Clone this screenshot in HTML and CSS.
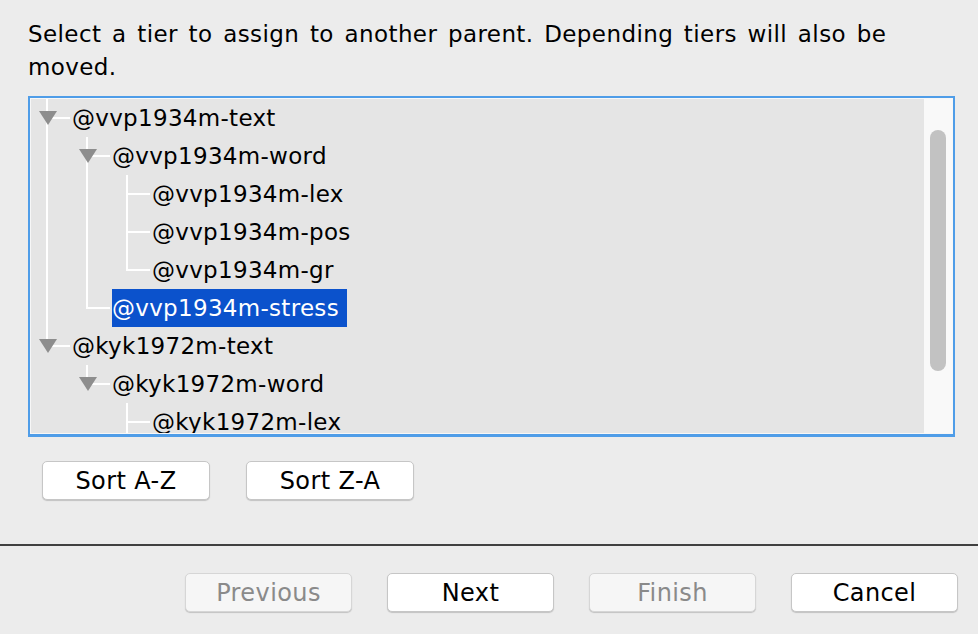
FILE: index.html
```html
<!DOCTYPE html>
<html>
<head>
<meta charset="utf-8">
<link rel="stylesheet" href="styles.css">
</head>
<body>
<div class="dialog">
  <p class="intro">Select a tier to assign to another parent. Depending tiers will also be moved.</p>

  <div class="treebox">
    <div class="tree">
      <div class="row">
        <span class="cell tee"><i class="toggle"></i></span>
        <span class="label">@vvp1934m-text</span>
      </div>
      <div class="row">
        <span class="cell pipe"></span>
        <span class="cell tee"><i class="toggle"></i></span>
        <span class="label">@vvp1934m-word</span>
      </div>
      <div class="row">
        <span class="cell pipe"></span>
        <span class="cell pipe"></span>
        <span class="cell tee"></span>
        <span class="label">@vvp1934m-lex</span>
      </div>
      <div class="row">
        <span class="cell pipe"></span>
        <span class="cell pipe"></span>
        <span class="cell tee"></span>
        <span class="label">@vvp1934m-pos</span>
      </div>
      <div class="row">
        <span class="cell pipe"></span>
        <span class="cell pipe"></span>
        <span class="cell elbow"></span>
        <span class="label">@vvp1934m-gr</span>
      </div>
      <div class="row">
        <span class="cell pipe"></span>
        <span class="cell elbow"></span>
        <span class="label selected">@vvp1934m-stress</span>
      </div>
      <div class="row">
        <span class="cell elbow"><i class="toggle"></i></span>
        <span class="label">@kyk1972m-text</span>
      </div>
      <div class="row">
        <span class="cell"></span>
        <span class="cell elbow"><i class="toggle"></i></span>
        <span class="label">@kyk1972m-word</span>
      </div>
      <div class="row">
        <span class="cell"></span>
        <span class="cell"></span>
        <span class="cell tee"></span>
        <span class="label">@kyk1972m-lex</span>
      </div>
    </div>
    <div class="scrollbar"><div class="thumb"></div></div>
  </div>

  <div class="sort-buttons">
    <button class="btn">Sort A-Z</button>
    <button class="btn">Sort Z-A</button>
  </div>

  <div class="separator"></div>

  <div class="footer">
    <button class="btn disabled">Previous</button>
    <button class="btn">Next</button>
    <button class="btn disabled">Finish</button>
    <button class="btn">Cancel</button>
  </div>
</div>
</body>
</html>
```

FILE: styles.css
```css
html, body {
  margin: 0;
  padding: 0;
  background: #ececec;
}

body {
  font-family: "DejaVu Sans", "Liberation Sans", sans-serif;
  font-size: 23px;
  color: #000;
}

.dialog {
  width: 978px;
  height: 634px;
  overflow: hidden;
}

.intro {
  margin: 0;
  padding: 18px 0 0 28px;
  width: 900px;
  line-height: 33px;
  letter-spacing: 0.4px;
  word-spacing: 3px;
}

.treebox {
  margin: 12px 0 0 28px;
  width: 927px;
  height: 341px;
  box-sizing: border-box;
  border: 2px solid #4f9de8;
  border-bottom-width: 3px;
  padding: 1px;
  background: #f7f7f7;
  display: flex;
}

.tree {
  flex: 1;
  background: #e5e5e5;
  overflow: hidden;
  padding-left: 1px;
}

.row {
  height: 38px;
  display: flex;
  align-items: stretch;
}

.cell {
  width: 40px;
  flex: none;
  position: relative;
}

.cell.pipe::before,
.cell.tee::before,
.cell.elbow::before {
  content: "";
  position: absolute;
  left: 14px;
  top: 0;
  width: 2px;
  background: #fff;
}

.cell.pipe::before,
.cell.tee::before {
  bottom: 0;
}

.cell.elbow::before {
  height: 20px;
}

.cell.tee::after,
.cell.elbow::after {
  content: "";
  position: absolute;
  left: 14px;
  right: 2px;
  top: 18px;
  height: 2px;
  background: #fff;
}

.toggle {
  position: absolute;
  left: 7px;
  top: 12px;
  width: 0;
  height: 0;
  border-left: 9px solid transparent;
  border-right: 9px solid transparent;
  border-top: 14px solid #8d8d8d;
  z-index: 1;
}

.label {
  line-height: 38px;
  white-space: nowrap;
  letter-spacing: 0.3px;
  padding: 0 8px 0 0;
}

.label.selected {
  background: #0b52cc;
  color: #fff;
}

.scrollbar {
  width: 28px;
  flex: none;
  background: #f9f9f9;
  position: relative;
}

.thumb {
  margin: 31px 0 0 6px;
  width: 16px;
  height: 241px;
  border-radius: 8px;
  background: #c2c2c2;
}

.sort-buttons {
  display: flex;
  gap: 36px;
  padding: 24px 0 0 42px;
}

.btn {
  font-family: "DejaVu Sans", "Liberation Sans", sans-serif;
  font-size: 24px;
  letter-spacing: 0.4px;
  color: #000;
  background: #fff;
  border: 1px solid #c6c6c6;
  border-radius: 5px;
  box-shadow: 0 1px 1px rgba(0, 0, 0, 0.18);
  width: 168px;
  height: 39px;
  padding: 0;
  margin: 0;
}

.btn.disabled {
  background: #f6f6f6;
  color: #8a8a8a;
  border-color: #d6d6d6;
}

.separator {
  margin-top: 44px;
  height: 2px;
  background: #404040;
}

.footer {
  display: flex;
  justify-content: flex-end;
  gap: 35px;
  padding: 27px 20px 0 0;
}

.footer .btn {
  width: 167px;
  height: 39px;
}
```
